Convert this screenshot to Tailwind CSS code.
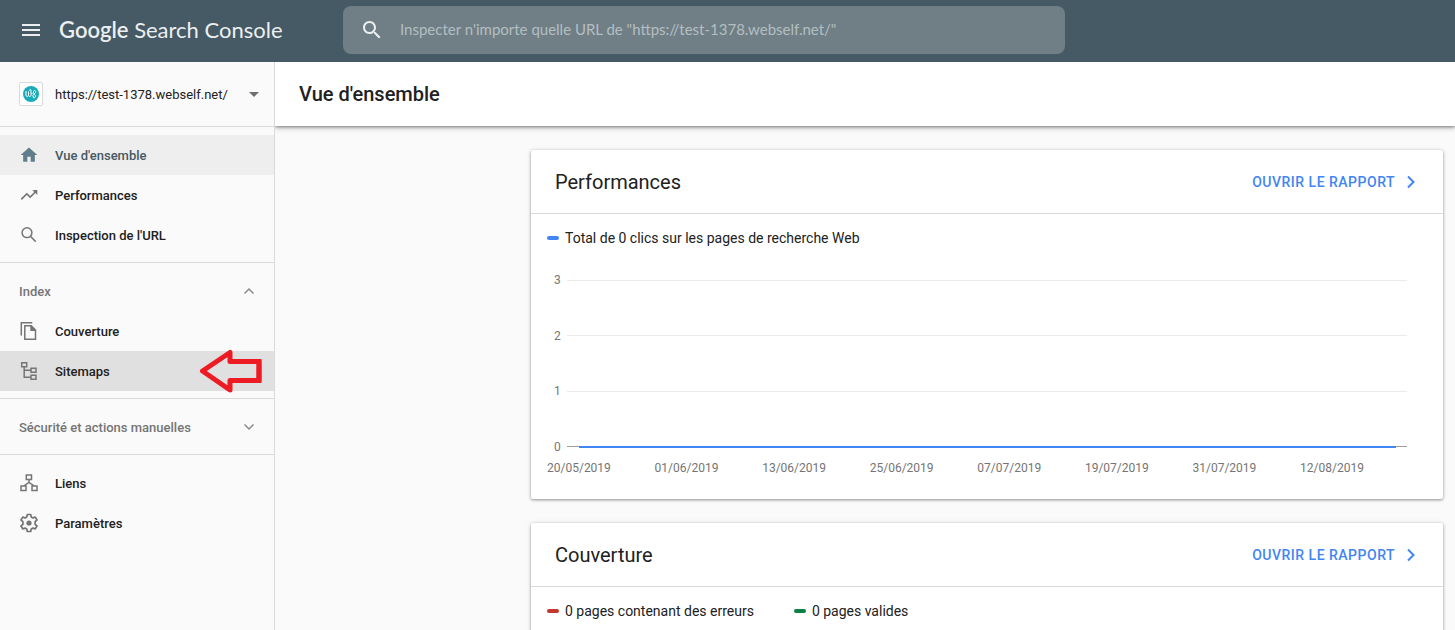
<!DOCTYPE html>
<html lang="fr">
<head>
<meta charset="utf-8">
<title>Google Search Console</title>
<script src="https://cdn.jsdelivr.net/npm/@tailwindcss/browser@4"></script>
</head>
<body class="h-screen flex flex-col overflow-hidden bg-[#fafafa] font-[Roboto,sans-serif] text-[#212121]">

<header class="relative z-20 flex h-[62px] shrink-0 items-center bg-[#455a64] pb-[2px]">
  <div class="flex w-[343px] shrink-0 items-center pl-[19px]">
    <button type="button" aria-label="Menu" class="mr-4">
      <svg class="block size-6" viewBox="0 0 24 24" fill="#eceff1"><path d="M3 18h18v-2H3v2zm0-5h18v-2H3v2zm0-7v2h18V6H3z"/></svg>
    </button>
    <a href="#" class="whitespace-nowrap font-[Lato,sans-serif] text-[22px] leading-8 text-[#eceff1]"><span class="font-semibold">Google</span> Search Console</a>
  </div>
  <label class="flex h-12 max-w-[722px] flex-1 items-center rounded-lg bg-[#6f7f85] pl-[17px]">
    <svg class="mr-4 block size-6 shrink-0" viewBox="0 0 24 24" fill="#eceff1"><path d="M15.5 14h-.79l-.28-.27C15.41 12.59 16 11.11 16 9.5 16 5.91 13.09 3 9.5 3S3 5.91 3 9.5 5.91 16 9.5 16c1.61 0 3.09-.59 4.23-1.57l.27.28v.79l5 4.99L20.49 19l-4.99-5zm-6 0C7.01 14 5 11.99 5 9.5S7.01 5 9.5 5 14 7.01 14 9.5 11.99 14 9.5 14z"/></svg>
    <input type="text" aria-label="Inspecter une URL" placeholder="Inspecter n'importe quelle URL de &quot;https://test-1378.webself.net/&quot;" class="h-12 min-w-0 flex-1 bg-transparent pb-[2px] font-[Lato,sans-serif] text-[15px] text-white outline-none placeholder:text-[#b4bec2]">
  </label>
</header>

<div class="flex min-h-0 flex-1">
  <nav class="relative z-10 w-[275px] shrink-0 border-r border-[#dadada] bg-[#fafafa] text-[13px] leading-5 font-medium">
    <button type="button" class="flex h-[65px] w-full items-center border-b border-[#dadada] pl-[19px] pr-[15px] font-normal">
      <span class="mr-3 flex size-6 items-center justify-center rounded-xs border border-[#dadada] bg-white">
        <svg class="block size-4" viewBox="0 0 16 16"><circle cx="8" cy="8" r="8" fill="#1aabb8"/><path d="M3 5v4c0 2 2.500 2 2.500 0V5.500M5.500 9c0 2 2.500 2 2.500 0V4.500c0-1.500-1.500-1-1.500 0M8.500 7.500h1M10 11.500c2.500.8 3.500-1.500 1.500-3s-1-4.500.5-4 .3 3-1.300 4-1 2.500.3 2.500" fill="none" stroke="#fff" stroke-width="1"/></svg>
      </span>
      <span class="flex-1 pt-px text-left whitespace-nowrap">https://test-1378.webself.net/</span>
      <svg class="block h-[5px] w-[10px]" viewBox="0 0 10 5" fill="#6e6e6e"><path d="M0 0h10L5 5z"/></svg>
    </button>

    <ul class="border-b border-[#dadada] pt-2 pb-[7px]">
      <li><a href="#" class="flex h-10 items-center gap-4 bg-[#eeeeee] pl-[19px] text-[#455a64]">
        <svg class="block size-5" viewBox="0 0 24 24" fill="#607d8b"><path d="M10 20v-6h4v6h5v-8h3L12 3 2 12h3v8z"/></svg><span class="pt-px">Vue d'ensemble</span></a></li>
      <li><a href="#" class="flex h-10 items-center gap-4 pl-[19px]">
        <svg class="block size-5" viewBox="0 0 24 24" fill="#757575"><path d="M16 6l2.290 2.290-4.880 4.880-4-4L2 16.590 3.410 18l6-6 4 4 6.300-6.290L22 12V6z"/></svg><span class="pt-px">Performances</span></a></li>
      <li><a href="#" class="flex h-10 items-center gap-4 pl-[19px]">
        <svg class="block size-5" viewBox="0 0 20 20" fill="none" stroke="#757575" stroke-width="1.500"><circle cx="8" cy="7.700" r="4.900"/><path d="M11.400 11.300l5.300 5.300"/></svg><span class="pt-px">Inspection de l'URL</span></a></li>
    </ul>

    <ul class="border-b border-[#dadada] pt-2 pb-[7px]">
      <li><button type="button" class="flex h-10 w-full items-center justify-between px-[19px] text-[#757575]"><span class="pt-px">Index</span>
        <svg class="block size-3" viewBox="0 0 12 12" fill="none" stroke="#8a8a8a" stroke-width="1.500"><path d="M1.500 8.500L6 4l4.500 4.500"/></svg></button></li>
      <li><a href="#" class="flex h-10 items-center gap-4 pl-[19px]">
        <svg class="block size-5" viewBox="0 0 20 20" fill="none" stroke="#757575" stroke-width="1.500"><path d="M2.300 14.500V1.700h11"/><path d="M5.800 4.800h6.400l4.300 4.300v9.200H5.800z"/><path d="M11.800 4.800l4.700 4.700h-4.700z" fill="#757575" stroke-width="1"/></svg><span class="pt-px">Couverture</span></a></li>
      <li class="relative"><a href="#" class="flex h-10 items-center gap-4 bg-[#e0e0e0] pl-[19px]">
        <svg class="block size-5" viewBox="0 0 20 20" fill="none" stroke="#757575" stroke-width="1.500"><path d="M2.700 1.700h5v4h-5zM12 7.200h5v4h-5zM12 14.300h5v4h-5zM5.200 5.700v10.600H12M5.200 9.200H12"/></svg><span class="pt-px">Sitemaps</span></a>
        <svg class="absolute -top-[3px] right-[10px] block h-12 w-[66px]" viewBox="0 0 66 48" fill="none" stroke="#ed1c24" stroke-width="5" stroke-linejoin="round"><path d="M4.500 23L32 4.500V13.500h29v19H32V42z"/><path d="M58 13.500h3v19h-3" stroke-linejoin="miter"/></svg></li>
    </ul>

    <div class="border-b border-[#dadada] pt-2 pb-[7px]">
      <button type="button" class="flex h-10 w-full items-center justify-between px-[19px] text-[#757575]"><span class="pt-px">Sécurité et actions manuelles</span>
        <svg class="block size-3" viewBox="0 0 12 12" fill="none" stroke="#8a8a8a" stroke-width="1.500"><path d="M1.500 3.500L6 8l4.500-4.500"/></svg></button>
    </div>

    <ul class="pt-2">
      <li><a href="#" class="flex h-10 items-center gap-4 pl-[19px]">
        <svg class="block size-5" viewBox="0 0 20 20" fill="none" stroke="#757575" stroke-width="1.500"><path d="M7.300 2h5.200v4.500H7.300zM2 13h5v4.500H2zM13 13h5v4.500h-5zM10 6.500v3M4.700 13L10 9.300l5.300 3.700"/></svg><span class="pt-px">Liens</span></a></li>
      <li><a href="#" class="flex h-10 items-center gap-4 pl-[19px]">
        <svg class="block size-5" viewBox="0 0 20 20" fill="none" stroke="#757575" stroke-width="1.700" stroke-linejoin="round"><path d="M8.300 1.500h3.400l.5 2.400 1.700 1 2.400-.8 1.700 2.900-1.900 1.700v2.600l1.900 1.700-1.700 2.900-2.400-.8-1.700 1-.5 2.400H8.300l-.5-2.400-1.700-1-2.400.8L2 13l1.900-1.700V8.700L2 7l1.700-2.900 2.400.8 1.700-1z"/><circle cx="10" cy="10" r="2.600" fill="#757575" stroke="none"/></svg><span class="pt-px">Paramètres</span></a></li>
    </ul>
  </nav>

  <main class="min-w-0 flex-1">
    <div class="flex h-16 items-center bg-white pl-6 shadow-[0_1px_3px_rgba(0,0,0,0.4),0_2px_6px_rgba(0,0,0,0.2)]">
      <h1 class="text-[20px] font-medium">Vue d'ensemble</h1>
    </div>

    <div class="mr-3 ml-64 flex flex-col gap-6 pt-6">
      <section class="rounded-xs bg-white pb-[23px] shadow-[0_1px_3px_rgba(0,0,0,0.4),0_0_6px_rgba(0,0,0,0.08)]">
        <div class="flex h-16 items-center justify-between border-b border-[#dadada] px-6">
          <h2 class="text-[20px]">Performances</h2>
          <a href="#" class="flex items-center gap-2 text-[14px] leading-5 font-medium tracking-[0.5px] text-[#4285f4]"><span class="pt-px">OUVRIR LE RAPPORT</span>
            <svg class="block size-4" viewBox="0 0 16 16" fill="none" stroke="#4285f4" stroke-width="2"><path d="M5 2.500L10.500 8 5 13.500"/></svg></a>
        </div>
        <p class="flex h-12 items-center gap-[6px] pl-4 text-[14px]"><span class="h-1 w-3 rounded-full bg-[#4285f4]"></span>Total de 0 clics sur les pages de recherche Web</p>

        <div class="relative mt-[10px] flex h-[183px] flex-col justify-between pr-9 pl-[23px] text-[12px] leading-4 text-[#757575]">
          <div class="flex h-4 items-center gap-[6px]">3<span class="h-px flex-1 bg-[#ebebeb]"></span></div>
          <div class="flex h-4 items-center gap-[6px]">2<span class="h-px flex-1 bg-[#ebebeb]"></span></div>
          <div class="flex h-4 items-center gap-[6px]">1<span class="h-px flex-1 bg-[#ebebeb]"></span></div>
          <div class="flex h-4 items-center gap-[6px]">0<span class="h-px flex-1 bg-[#9e9e9e]"></span></div>
          <span class="absolute right-[47px] bottom-[7px] left-12 h-[2px] bg-[#4285f4]"></span>
        </div>
        <div class="mt-[5px] mr-[79px] ml-4 flex justify-between text-[12px] leading-4 text-[#757575]">
          <span>20/05/2019</span><span>01/06/2019</span><span>13/06/2019</span><span>25/06/2019</span><span>07/07/2019</span><span>19/07/2019</span><span>31/07/2019</span><span>12/08/2019</span>
        </div>
      </section>

      <section class="rounded-xs bg-white pb-6 shadow-[0_1px_3px_rgba(0,0,0,0.4),0_0_6px_rgba(0,0,0,0.08)]">
        <div class="flex h-16 items-center justify-between border-b border-[#dadada] px-6">
          <h2 class="text-[20px]">Couverture</h2>
          <a href="#" class="flex items-center gap-2 text-[14px] leading-5 font-medium tracking-[0.5px] text-[#4285f4]"><span class="pt-px">OUVRIR LE RAPPORT</span>
            <svg class="block size-4" viewBox="0 0 16 16" fill="none" stroke="#4285f4" stroke-width="2"><path d="M5 2.500L10.500 8 5 13.500"/></svg></a>
        </div>
        <div class="flex h-12 items-center gap-10 pl-4 text-[14px]">
          <p class="flex items-center gap-[6px]"><span class="h-1 w-3 rounded-full bg-[#c5372c]"></span>0 pages contenant des erreurs</p>
          <p class="flex items-center gap-[6px]"><span class="h-1 w-3 rounded-full bg-[#0b8043]"></span>0 pages valides</p>
        </div>
      </section>
    </div>
  </main>
</div>
</body>
</html>
